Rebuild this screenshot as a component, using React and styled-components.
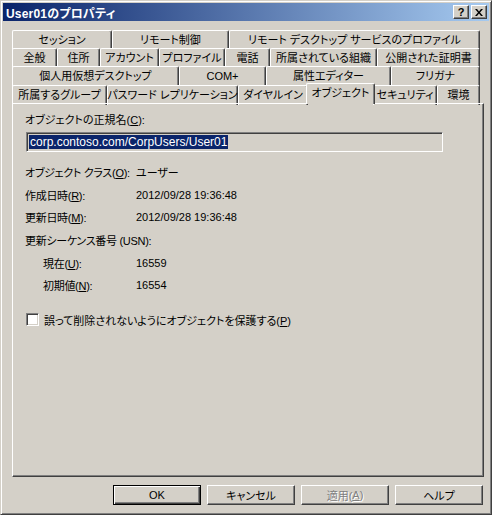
import React from "react";
import styled, { createGlobalStyle, css } from "styled-components";

const FONT = `"Liberation Sans", "Noto Sans CJK JP", sans-serif`;
const FACE = "#d4d0c8";

const Global = createGlobalStyle`
  html, body {
    margin: 0;
    padding: 0;
    background: ${FACE};
  }
  body {
    font-family: ${FONT};
    font-size: 11px;
    font-feature-settings: "palt";
    color: #000;
  }
`;

const Window = styled.div`
  box-sizing: border-box;
  width: 492px;
  height: 515px;
  background: ${FACE};
  border-top: 1px solid ${FACE};
  border-left: 1px solid ${FACE};
  border-right: 1px solid #404040;
  border-bottom: 1px solid #404040;
  box-shadow: inset 1px 1px #fff, inset -1px -1px #808080;
  padding: 2px;
  display: flex;
  flex-direction: column;
`;

const TitleBar = styled.div`
  height: 18px;
  display: flex;
  align-items: center;
  padding: 0 2px 0 3px;
  background: linear-gradient(to right, #0a246a, #a6caf0);
`;

const Title = styled.div`
  flex: 1;
  color: #fff;
  font-weight: bold;
  font-size: 12px;
  letter-spacing: 0.2px;
`;

const CaptionButton = styled.div`
  box-sizing: border-box;
  width: 16px;
  height: 14px;
  margin-left: ${(p) => (p.$gap ? "2px" : "0")};
  background: ${FACE};
  border-top: 1px solid #fff;
  border-left: 1px solid #fff;
  border-right: 1px solid #404040;
  border-bottom: 1px solid #404040;
  box-shadow: inset -1px -1px #808080;
  display: flex;
  align-items: center;
  justify-content: center;
  font-family: "Liberation Sans", sans-serif;
  font-weight: bold;
  font-size: 11px;
  line-height: 1;
`;

const Body = styled.div`
  flex: 1;
  display: flex;
  flex-direction: column;
  padding: 9px 0 0 9px;
`;

const TabStrip = styled.div`
  width: 468px;
  display: flex;
  flex-direction: column;
`;

const TabRow = styled.div`
  display: flex;
  height: ${(p) => p.$h || 18}px;
`;

const Tab = styled.div`
  box-sizing: border-box;
  flex: none;
  width: ${(p) => p.$w}px;
  height: ${(p) => (p.$h || 18) + 2}px;
  display: flex;
  justify-content: center;
  padding-top: 2px;
  line-height: 14px;
  white-space: nowrap;
  background: ${FACE};
  border-top: 1px solid #fff;
  border-left: 1px solid #fff;
  border-right: 1px solid #404040;
  border-top-left-radius: 2px;
  border-top-right-radius: 2px;
  box-shadow: inset -1px 0 #808080;
  ${(p) =>
    p.$active &&
    css`
      position: relative;
      z-index: 2;
      width: ${p.$w + 4}px;
      height: ${(p.$h || 18) + 3}px;
      margin: -2px -2px -1px -2px;
      padding-top: 2px;
    `}
`;

const Panel = styled.div`
  box-sizing: border-box;
  width: 472px;
  height: 374px;
  border-top: 1px solid #fff;
  border-left: 1px solid #fff;
  border-right: 1px solid #404040;
  border-bottom: 1px solid #404040;
  box-shadow: inset -1px -1px #808080;
  padding: 8px 0 0 13px;
  display: flex;
  flex-direction: column;
`;

const FieldLabel = styled.div`
  height: 16px;
  line-height: 16px;
  margin-left: -1px;
`;

const TextBox = styled.div`
  box-sizing: border-box;
  width: 417px;
  height: 20px;
  margin-top: 4px;
  padding: 2px 0 0 2px;
  border-top: 1px solid #808080;
  border-left: 1px solid #808080;
  border-right: 1px solid #fff;
  border-bottom: 1px solid #fff;
  box-shadow: inset 1px 1px #404040, inset -1px -1px ${FACE};
  display: flex;
`;

const Selection = styled.span`
  background: #0a246a;
  color: #fff;
  height: 14px;
  line-height: 14px;
  font-size: 12px;
  padding: 0 1px;
`;

const InfoGrid = styled.div`
  margin-top: 9px;
  margin-left: -1px;
  display: grid;
  grid-template-columns: 111px auto;
  grid-auto-rows: 22.6px;
  align-items: center;
`;

const Label = styled.div`
  white-space: nowrap;
  letter-spacing: -0.3px;
  padding-left: ${(p) => (p.$indent ? 18 : 0)}px;
  grid-column: ${(p) => (p.$wide ? "1 / 3" : "auto")};
`;

const Value = styled.div`
  font-size: 11px;
`;

const CheckRow = styled.label`
  margin-top: 15px;
  display: flex;
  align-items: center;
  gap: 5px;
`;

const CheckBox = styled.span`
  box-sizing: border-box;
  width: 13px;
  height: 13px;
  background: #fff;
  border-top: 1px solid #808080;
  border-left: 1px solid #808080;
  border-right: 1px solid #fff;
  border-bottom: 1px solid #fff;
  box-shadow: inset 1px 1px #404040, inset -1px -1px ${FACE};
`;

const Footer = styled.div`
  display: flex;
  justify-content: flex-end;
  gap: 6px;
  padding: 8px 6px 0 0;
`;

const Button = styled.div`
  box-sizing: border-box;
  width: 88px;
  height: 20px;
  display: flex;
  align-items: center;
  justify-content: center;
  border-top: 1px solid #fff;
  border-left: 1px solid #fff;
  border-right: 1px solid #404040;
  border-bottom: 1px solid #404040;
  box-shadow: inset -1px -1px #808080;
  color: ${(p) => (p.$disabled ? "#808080" : "#000")};
  text-shadow: ${(p) => (p.$disabled ? "1px 1px #fff" : "none")};
  ${(p) =>
    p.$default &&
    css`
      border: 1px solid #000;
      box-shadow: inset 1px 1px #fff, inset -1px -1px #404040,
        inset -2px -2px #808080;
    `}
`;

const tabRows = [
  { h: 18, tabs: [["セッション", 100], ["リモート制御", 117], ["リモート デスクトップ サービスのプロファイル", 251]] },
  {
    h: 18,
    tabs: [
      ["全般", 45],
      ["住所", 43],
      ["アカウント", 59],
      ["プロファイル", 66],
      ["電話", 45],
      ["所属されている組織", 107],
      ["公開された証明書", 103],
    ],
  },
  { h: 19, tabs: [["個人用仮想デスクトップ", 167], ["COM+", 87], ["属性エディター", 125], ["フリガナ", 89]] },
  {
    h: 18,
    tabs: [
      ["所属するグループ", 95],
      ["パスワード レプリケーション", 131],
      ["ダイヤルイン", 70],
      ["オブジェクト", 65, true],
      ["セキュリティ", 64],
      ["環境", 43],
    ],
  },
];

export default function App() {
  return (
    <>
      <Global />
      <Window>
        <TitleBar>
          <Title>User01のプロパティ</Title>
          <CaptionButton>?</CaptionButton>
          <CaptionButton $gap>
            <svg width="8" height="7" viewBox="0 0 8 7">
              <path d="M0 0h2l2 2.4L6 0h2L5 3.5 8 7H6L4 4.6 2 7H0l3-3.5z" fill="#000" />
            </svg>
          </CaptionButton>
        </TitleBar>
        <Body>
          <TabStrip>
            {tabRows.map((row, i) => (
              <TabRow key={i} $h={row.h}>
                {row.tabs.map(([name, w, active]) => (
                  <Tab key={name} $w={w} $h={row.h} $active={active}>
                    {name}
                  </Tab>
                ))}
              </TabRow>
            ))}
          </TabStrip>
          <Panel>
            <FieldLabel>
              オブジェクトの正規名(<u>C</u>):
            </FieldLabel>
            <TextBox>
              <Selection>corp.contoso.com/CorpUsers/User01</Selection>
            </TextBox>
            <InfoGrid>
              <Label>
                オブジェクト クラス(<u>O</u>):
              </Label>
              <div>ユーザー</div>
              <Label>
                作成日時(<u>R</u>):
              </Label>
              <Value>2012/09/28 19:36:48</Value>
              <Label>
                更新日時(<u>M</u>):
              </Label>
              <Value>2012/09/28 19:36:48</Value>
              <Label $wide>更新シーケンス番号 (USN):</Label>
              <Label $indent>
                現在(<u>U</u>):
              </Label>
              <Value>16559</Value>
              <Label $indent>
                初期値(<u>N</u>):
              </Label>
              <Value>16554</Value>
            </InfoGrid>
            <CheckRow>
              <CheckBox />
              <span>
                誤って削除されないようにオブジェクトを保護する(<u>P</u>)
              </span>
            </CheckRow>
          </Panel>
          <Footer>
            <Button $default>OK</Button>
            <Button>キャンセル</Button>
            <Button $disabled>
              適用(<u>A</u>)
            </Button>
            <Button>ヘルプ</Button>
          </Footer>
        </Body>
      </Window>
    </>
  );
}
